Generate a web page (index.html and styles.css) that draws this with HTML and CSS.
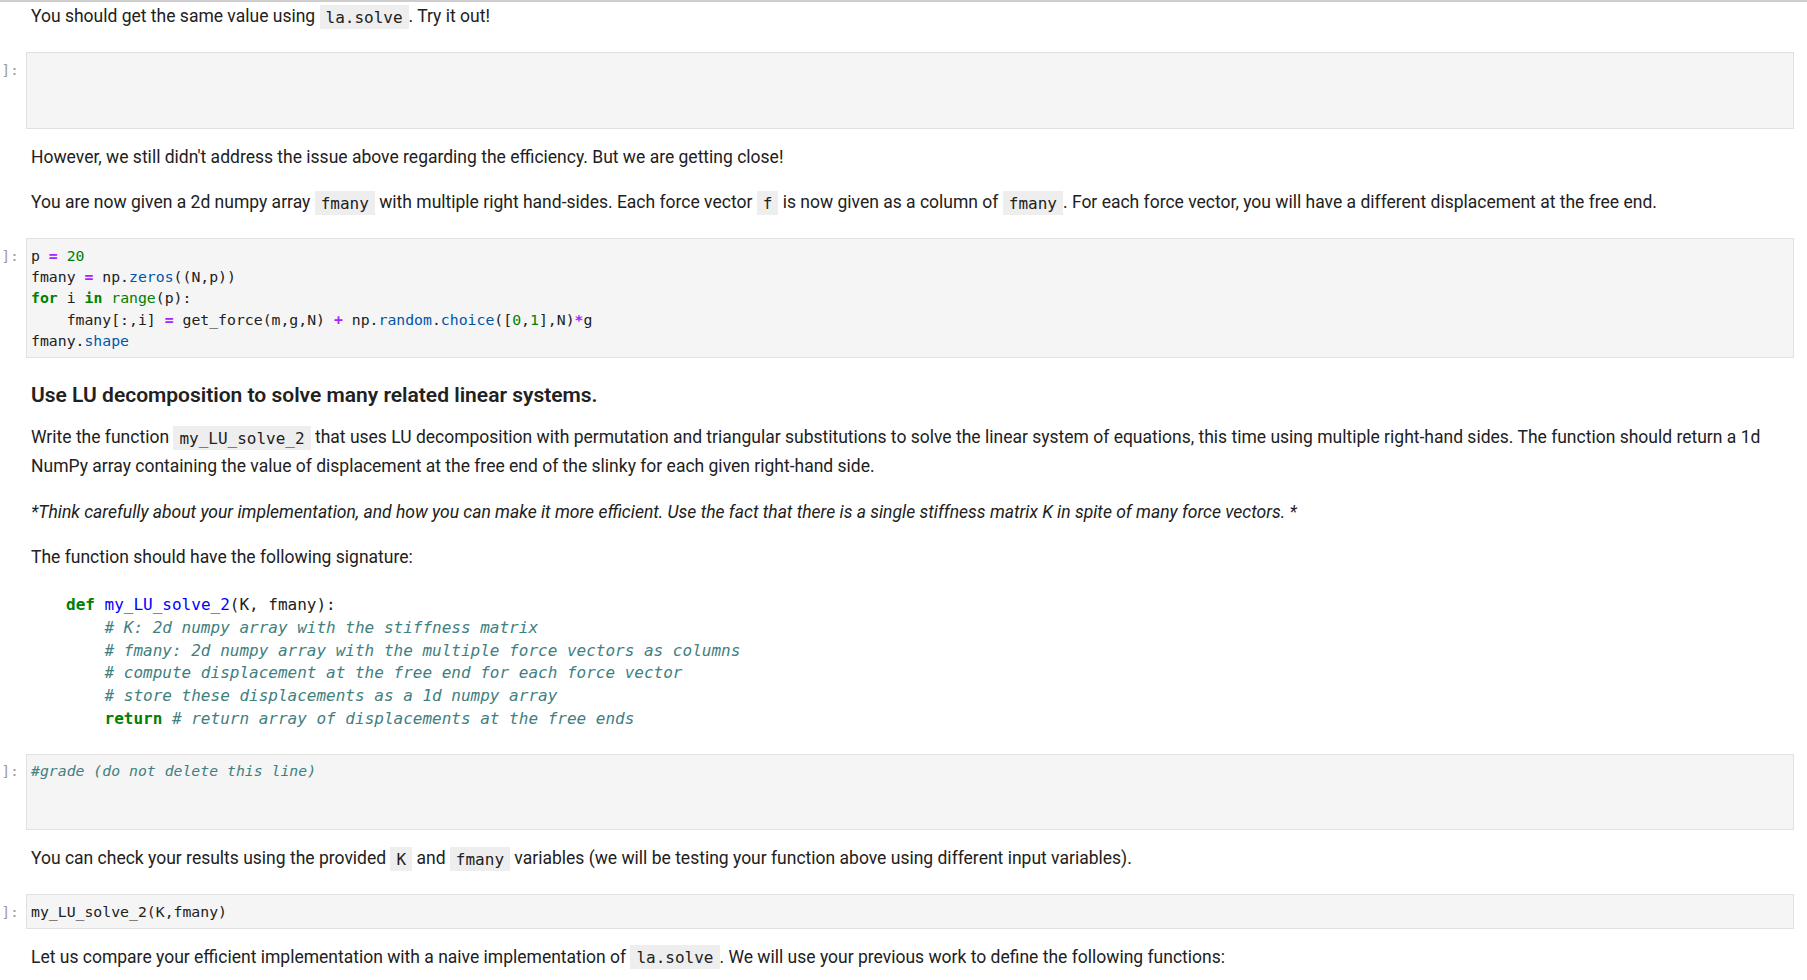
FILE: index.html
```html
<!DOCTYPE html>
<html lang="en">
<head>
<meta charset="utf-8">
<title>Notebook</title>
<link rel="stylesheet" href="styles.css">
</head>
<body>
<div class="notebook">

  <div class="cell md-cell first">
    <div class="prompt"></div>
    <div class="md">
      <p>You should get the same value using <code class="ic">la.solve</code>. Try it out!</p>
    </div>
  </div>

  <div class="cell code-cell">
    <div class="prompt">]:</div>
    <div class="input"><div class="editor lines3"></div></div>
  </div>

  <div class="cell md-cell">
    <div class="prompt"></div>
    <div class="md">
      <p>However, we still didn't address the issue above regarding the efficiency. But we are getting close!</p>
      <p>You are now given a 2d numpy array <code class="ic">fmany</code> with multiple right hand-sides. Each force vector <code class="ic">f</code> is now given as a column of <code class="ic">fmany</code>. For each force vector, you will have a different displacement at the free end.</p>
    </div>
  </div>

  <div class="cell code-cell">
    <div class="prompt">]:</div>
    <div class="input">
      <div class="editor">
        <div class="ln">p <span class="op">=</span> <span class="num">20</span></div>
        <div class="ln">fmany <span class="op">=</span> np.<span class="prop">zeros</span>((N,p))</div>
        <div class="ln"><span class="kw">for</span> i <span class="kw">in</span> <span class="bi">range</span>(p):</div>
        <div class="ln">    fmany[:,i] <span class="op">=</span> get_force(m,g,N) <span class="op">+</span> np.<span class="prop">random</span>.<span class="prop">choice</span>([<span class="num">0</span>,<span class="num">1</span>],N)<span class="op">*</span>g</div>
        <div class="ln">fmany.<span class="prop">shape</span></div>
      </div>
    </div>
  </div>

  <div class="cell md-cell">
    <div class="prompt"></div>
    <div class="md">
      <h3>Use LU decomposition to solve many related linear systems.</h3>
      <p>Write the function <code class="ic">my_LU_solve_2</code> that uses LU decomposition with permutation and triangular substitutions to solve the linear system of equations, this time using multiple right-hand sides. The function should return a 1d NumPy array containing the value of displacement at the free end of the slinky for each given right-hand side.</p>
      <p><em>*Think carefully about your implementation, and how you can make it more efficient. Use the fact that there is a single stiffness matrix K in spite of many force vectors. *</em></p>
      <p>The function should have the following signature:</p>
      <div class="sig">
        <div class="ln"><span class="k">def</span> <span class="nf">my_LU_solve_2</span>(K, fmany):</div>
        <div class="ln">    <span class="c"># K: 2d numpy array with the stiffness matrix</span></div>
        <div class="ln">    <span class="c"># fmany: 2d numpy array with the multiple force vectors as columns</span></div>
        <div class="ln">    <span class="c"># compute displacement at the free end for each force vector</span></div>
        <div class="ln">    <span class="c"># store these displacements as a 1d numpy array</span></div>
        <div class="ln">    <span class="k">return</span> <span class="c"># return array of displacements at the free ends</span></div>
      </div>
    </div>
  </div>

  <div class="cell code-cell">
    <div class="prompt">]:</div>
    <div class="input">
      <div class="editor lines3">
        <div class="ln"><span class="cm">#grade (do not delete this line)</span></div>
      </div>
    </div>
  </div>

  <div class="cell md-cell">
    <div class="prompt"></div>
    <div class="md">
      <p>You can check your results using the provided <code class="ic">K</code> and <code class="ic">fmany</code> variables (we will be testing your function above using different input variables).</p>
    </div>
  </div>

  <div class="cell code-cell">
    <div class="prompt">]:</div>
    <div class="input">
      <div class="editor">
        <div class="ln">my_LU_solve_2(K,fmany)</div>
      </div>
    </div>
  </div>

  <div class="cell md-cell">
    <div class="prompt"></div>
    <div class="md">
      <p>Let us compare your efficient implementation with a naive implementation of <code class="ic">la.solve</code>. We will use your previous work to define the following functions:</p>
    </div>
  </div>

</div>
</body>
</html>
```
FILE: styles.css
```css
* { box-sizing: border-box; }

html, body {
  margin: 0;
  padding: 0;
  background: #ffffff;
  overflow: hidden;
}

body {
  font-family: Roboto, "Segoe UI", "Noto Sans", sans-serif;
  font-size: 17.5px;
  line-height: 28px;
  color: #212121;
}

.notebook {
  border-top: 2px solid #cdcdcd;
}

.cell {
  display: flex;
  align-items: flex-start;
}

.prompt {
  flex: none;
  width: 26px;
  padding-right: 7px;
  text-align: right;
  font-family: "DejaVu Sans Mono", monospace;
  font-size: 14.8px;
  line-height: 21.25px;
  color: #9e9e9e;
}

.code-cell {
  padding: 6px 0;
}

.code-cell .prompt {
  padding-top: 6.5px;
}

.input {
  flex: 1;
  min-width: 0;
  margin-right: 13px;
}

.editor {
  background: #f5f5f5;
  border: 1px solid #e0e0e0;
  padding: 5.5px 4px;
  font-family: "DejaVu Sans Mono", monospace;
  font-size: 14.8px;
  line-height: 21.25px;
  color: #212121;
  min-height: 34.25px;
}

.editor.lines3 {
  height: 76.75px;
}

.ln {
  white-space: pre;
}

.op { color: #aa22ff; font-weight: bold; }
.num { color: #008000; }
.kw { color: #008000; font-weight: bold; }
.bi { color: #008000; }
.prop { color: #0055aa; }
.cm { color: #408080; font-style: italic; }

.md-cell .md {
  flex: 1;
  min-width: 0;
  margin-right: 13px;
  padding: 8px 6px 15px 5px;
}

.md-cell.first .md {
  padding-top: 0;
}

.md p {
  margin: 0 0 17.5px;
}

.md p:last-child {
  margin-bottom: 0;
}

.md em {
  font-style: italic;
}

.md h3 {
  margin: 11.5px 0 15px;
  font-size: 21px;
  line-height: 25px;
  font-weight: 600;
  color: #212121;
}

.ic {
  font-family: "DejaVu Sans Mono", monospace;
  font-size: 16px;
  background: #eeeeee;
  padding: 2.5px 6px;
  color: #212121;
}

.sig {
  padding: 5.6px 0 2px 35px;
  font-family: "DejaVu Sans Mono", monospace;
  font-size: 16px;
  line-height: 22.75px;
  color: #212121;
}

.sig .k { color: #008000; font-weight: bold; }
.sig .nf { color: #0000ff; }
.sig .c { color: #408080; font-style: italic; }
```
